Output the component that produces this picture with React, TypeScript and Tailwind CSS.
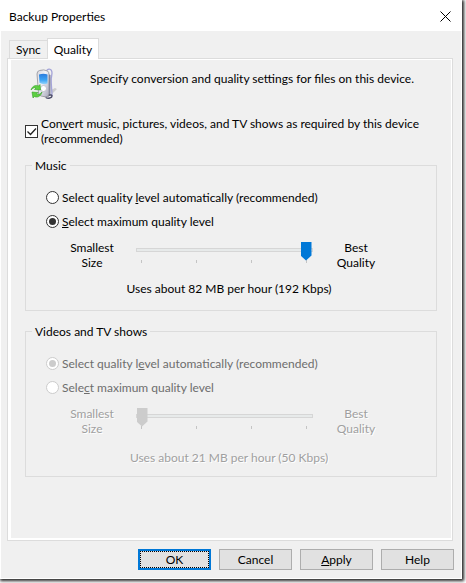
import { useState } from "react";
import type { ReactNode } from "react";

const textButton =
  "h-[21px] w-[73px] border border-[#adadad] bg-[#e1e1e1] text-center leading-[15px]";

function DeviceIcon() {
  return (
    <svg viewBox="0 0 32 32" className="h-8 w-8 shrink-0" aria-hidden="true">
      <defs>
        <linearGradient id="shell" x1="0" x2="1" y1="0" y2="1">
          <stop offset="0" stopColor="#d4d4dc" />
          <stop offset="0.4" stopColor="#f4f4f8" />
          <stop offset="1" stopColor="#a8a8bc" />
        </linearGradient>
        <linearGradient id="screen" x1="0" x2="0" y1="0" y2="1">
          <stop offset="0" stopColor="#2c7cdc" />
          <stop offset="0.6" stopColor="#3ca4f4" />
          <stop offset="1" stopColor="#94d4fc" />
        </linearGradient>
      </defs>
      <path d="M23 22l4-2 2 1-5 5z" fill="#cdcdcd" />
      <path d="M18.500 4c0-4 5.500-4 5.500 1l-.5 4c-1 3 .5 12 .5 19" fill="none" stroke="#a4a4d8" strokeWidth="1.300" />
      <path d="M20 6l2.500 1v20l-2.500 2z" fill="#7c80a0" />
      <path d="M17 29c2-2 7-3 7-1s-4 3-6 1.500" fill="none" stroke="#50506c" strokeWidth="1.500" />
      <path d="M11.500 2.500q4.500-1.500 8 .5 1.500 1 1.500 3.500v19q0 3-3 3.500l-5-1q-2.500-.5-2.500-3L9 6q0-3 2.500-3.500z" fill="url(#shell)" stroke="#909098" strokeWidth="0.8" />
      <path d="M11 6.500q4.500-1.500 8.500 0v9q-4 1.500-8-.5z" fill="url(#screen)" />
      <ellipse cx="15.500" cy="20.500" rx="3" ry="3" fill="#fff" stroke="#b4b4c0" strokeWidth="0.7" />
      <path d="M3 22c1-4 5-5.500 7.500-4l1.500-1.500.5 5.500-6-.5 1.500-1.500c-2-1-3.500.5-5 2z" fill="#5cd040" stroke="#34a028" strokeWidth="0.6" />
      <path d="M14 24c-1 4.500-5 6-7.500 4.500l-1.500 1.500-1-6 6 .5-1.500 1.500c2 1 4 0 5.500-2z" fill="#5cd040" stroke="#34a028" strokeWidth="0.6" />
    </svg>
  );
}

type RadioProps = {
  name: string;
  checked: boolean;
  disabled?: boolean;
  onSelect: () => void;
  children: ReactNode;
};

function Radio({ name, checked, disabled, onSelect, children }: RadioProps) {
  return (
    <label className="flex h-6 items-center gap-[3px] has-disabled:text-[#6d6d6d]">
      <input
        type="radio"
        name={name}
        checked={checked}
        disabled={disabled}
        onChange={onSelect}
        className="grid size-[13px] shrink-0 appearance-none place-items-center rounded-full border border-[#333] bg-white before:size-[7px] before:rounded-full before:bg-[#333] not-checked:before:hidden disabled:border-[#ccc] disabled:before:bg-[#ccc]"
      />
      <span>{children}</span>
    </label>
  );
}

type QualityGroupProps = {
  title: string;
  name: string;
  disabled?: boolean;
  auto: boolean;
  onAuto: (auto: boolean) => void;
  level: number;
  onLevel: (level: number) => void;
  usage: string;
  usageSpacing: string;
  autoLabel: ReactNode;
  maxLabel: ReactNode;
};

function QualityGroup(props: QualityGroupProps) {
  const { title, name, disabled, auto, onAuto, level, onLevel, usage, usageSpacing, autoLabel, maxLabel } = props;
  const dim = disabled ? "text-[#a0a0a0] [text-shadow:1px_1px_0_#fff]" : "";

  return (
    <fieldset className="mx-3.5 border border-[#dcdcdc] px-5">
      <legend className="-ml-3.5 px-[3px]">{title}</legend>
      <div className="pt-3">
        <Radio name={name} checked={auto} disabled={disabled} onSelect={() => onAuto(true)}>
          {autoLabel}
        </Radio>
        <Radio name={name} checked={!auto} disabled={disabled} onSelect={() => onAuto(false)}>
          {maxLabel}
        </Radio>
      </div>
      <div className={`mt-[7px] flex justify-between pr-8 pl-[18px] text-center ${dim}`}>
        <span className="w-14">Smallest<br />Size</span>
        <div className="w-[177px]">
          <input
            type="range"
            aria-label={`${title} quality level`}
            min={0}
            max={3}
            value={level}
            disabled={disabled}
            onChange={(e) => onLevel(Number(e.target.value))}
            className="block h-[19px] w-full appearance-none bg-transparent [&::-webkit-slider-runnable-track]:h-1 [&::-webkit-slider-runnable-track]:border [&::-webkit-slider-runnable-track]:border-[#d6d6d6] [&::-webkit-slider-runnable-track]:bg-[#e7eaea] [&::-webkit-slider-thumb]:-mt-[7px] [&::-webkit-slider-thumb]:h-[19px] [&::-webkit-slider-thumb]:w-[11px] [&::-webkit-slider-thumb]:appearance-none [&::-webkit-slider-thumb]:bg-[#0078d7] [&::-webkit-slider-thumb]:[clip-path:polygon(0_0,100%_0,100%_74%,50%_100%,0_74%)] disabled:[&::-webkit-slider-thumb]:bg-[#ccc]"
          />
          <div className="mt-px flex justify-between px-[5px]">
            {[0, 1, 2, 3].map((tick) => (
              <i key={tick} className="h-[3px] w-px bg-[#c4c4c4]" />
            ))}
          </div>
        </div>
        <span className="w-14">Best<br />Quality</span>
      </div>
      <p className={`pr-1 text-center ${usageSpacing} ${dim}`}>{usage}</p>
    </fieldset>
  );
}

export default function App() {
  const [tab, setTab] = useState("Quality");
  const [convert, setConvert] = useState(true);
  const [musicAuto, setMusicAuto] = useState(false);
  const [musicLevel, setMusicLevel] = useState(3);
  const [videoAuto, setVideoAuto] = useState(true);
  const [videoLevel, setVideoLevel] = useState(0);

  return (
    <div className="flex min-h-screen flex-col bg-white pr-1 pb-1 font-[Lato,'Open_Sans',sans-serif] text-[12px] leading-[15px] text-black">
      <main className="flex grow flex-col border border-white bg-[#f0f0f0] shadow-[1px_1px_3px_1px_#222]">
        <header className="flex h-[30px] items-center justify-between bg-white pr-2.5 pl-2">
          <h1>Backup Properties</h1>
          <button aria-label="Close">
            <svg viewBox="0 0 11 11" className="size-[11px]" stroke="#000" strokeWidth="1">
              <path d="M.5.5l10 10M10.5.5l-10 10" />
            </svg>
          </button>
        </header>

        <div className="flex grow flex-col pt-[7px] pr-2 pl-1.5">
          <div role="tablist" className="z-10 -mb-px flex items-end pl-0.5">
            {["Sync", "Quality"].map((name) => (
              <button
                key={name}
                role="tab"
                aria-selected={tab === name}
                onClick={() => setTab(name)}
                className="h-[19px] border border-[#dcdcdc] px-1.5 not-aria-selected:border-r-0 aria-selected:h-[21px] aria-selected:border-b-0 aria-selected:bg-white"
              >
                {name}
              </button>
            ))}
          </div>

          <div role="tabpanel" className="flex grow flex-col border border-[#dcdcdc] bg-white pt-px pr-px pb-0.5 pl-[3px]">
            <div className="grow bg-[#f0f0f0] pt-2">
              <div className="flex pl-[17px]">
                <DeviceIcon />
                <p className="pt-[3px] pl-[30px]">
                  Specify conversion and quality settings for files on this device.
                </p>
              </div>

              <label className="mt-4 flex items-center gap-[3px] px-3.5">
                <input
                  type="checkbox"
                  checked={convert}
                  onChange={(e) => setConvert(e.target.checked)}
                  className="peer size-[13px] shrink-0 appearance-none border border-[#333] bg-white"
                />
                <svg viewBox="0 0 13 13" className="pointer-events-none -ml-4 size-[13px] shrink-0 opacity-0 peer-checked:opacity-100" fill="none" stroke="#222" strokeWidth="1.3">
                  <path d="M2.5 6.5l3 3 5.5-6" />
                </svg>
                <span>
                  Con<u>v</u>ert music, pictures, videos, and TV shows as required by this device (recommended)
                </span>
              </label>

              <div className="mt-3 flex flex-col gap-[13px]">
                <QualityGroup
                  title="Music"
                  name="music"
                  auto={musicAuto}
                  onAuto={setMusicAuto}
                  level={musicLevel}
                  onLevel={setMusicLevel}
                  usage="Uses about 82 MB per hour (192 Kbps)"
                  usageSpacing="pt-[11px] pb-3.5"
                  autoLabel={<>Select quality <u>l</u>evel automatically (recommended)</>}
                  maxLabel={<><u>S</u>elect maximum quality level</>}
                />
                <QualityGroup
                  title="Videos and TV shows"
                  name="videos"
                  disabled
                  auto={videoAuto}
                  onAuto={setVideoAuto}
                  level={videoLevel}
                  onLevel={setVideoLevel}
                  usage="Uses about 21 MB per hour (50 Kbps)"
                  usageSpacing="pt-3.5 pb-[11px]"
                  autoLabel={<>Select quality l<u>e</u>vel automatically (recommended)</>}
                  maxLabel={<>Sele<u>c</u>t maximum quality level</>}
                />
              </div>
            </div>
          </div>
        </div>

        <footer className="flex justify-end gap-2 pt-2 pr-[7px] pb-2">
          <button className="h-[21px] w-[73px] border-2 border-[#0078d7] bg-[#e1e1e1] leading-[15px] outline-1 -outline-offset-3 outline-black outline-dotted">
            OK
          </button>
          <button className={textButton}>Cancel</button>
          <button className={textButton}><u>A</u>pply</button>
          <button className={textButton}>Help</button>
        </footer>
      </main>
    </div>
  );
}
